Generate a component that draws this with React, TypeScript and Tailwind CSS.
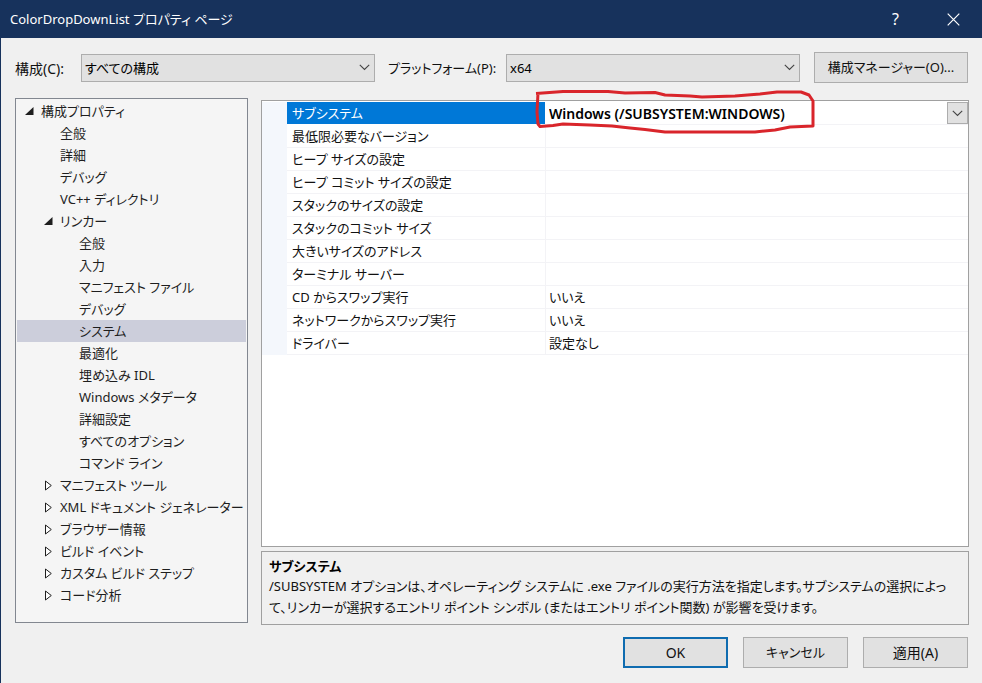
import { useState } from "react";

type TreeItem = { label: string; level: 0 | 1 | 2; state?: "open" | "closed" };

const treeItems: TreeItem[] = [
  { label: "構成プロパティ", level: 0, state: "open" },
  { label: "全般", level: 1 },
  { label: "詳細", level: 1 },
  { label: "デバッグ", level: 1 },
  { label: "VC++ ディレクトリ", level: 1 },
  { label: "リンカー", level: 1, state: "open" },
  { label: "全般", level: 2 },
  { label: "入力", level: 2 },
  { label: "マニフェスト ファイル", level: 2 },
  { label: "デバッグ", level: 2 },
  { label: "システム", level: 2 },
  { label: "最適化", level: 2 },
  { label: "埋め込み IDL", level: 2 },
  { label: "Windows メタデータ", level: 2 },
  { label: "詳細設定", level: 2 },
  { label: "すべてのオプション", level: 2 },
  { label: "コマンド ライン", level: 2 },
  { label: "マニフェスト ツール", level: 1, state: "closed" },
  { label: "XML ドキュメント ジェネレーター", level: 1, state: "closed" },
  { label: "ブラウザー情報", level: 1, state: "closed" },
  { label: "ビルド イベント", level: 1, state: "closed" },
  { label: "カスタム ビルド ステップ", level: 1, state: "closed" },
  { label: "コード分析", level: 1, state: "closed" },
];

const properties = [
  { name: "最低限必要なバージョン", value: "" },
  { name: "ヒープ サイズの設定", value: "" },
  { name: "ヒープ コミット サイズの設定", value: "" },
  { name: "スタックのサイズの設定", value: "" },
  { name: "スタックのコミット サイズ", value: "" },
  { name: "大きいサイズのアドレス", value: "" },
  { name: "ターミナル サーバー", value: "" },
  { name: "CD からスワップ実行", value: "いいえ" },
  { name: "ネットワークからスワップ実行", value: "いいえ" },
  { name: "ドライバー", value: "設定なし" },
];

const indent = { 0: "pl-2", 1: "pl-[27px]", 2: "pl-[46px]" };

function Chevron() {
  return (
    <svg width="11" height="7" viewBox="0 0 11 7" fill="none" stroke="#444" aria-hidden="true">
      <path d="M0.8 0.8 5.5 5.5 10.2 0.8" strokeWidth="1.1" />
    </svg>
  );
}

function Expander({ state }: { state?: "open" | "closed" }) {
  return (
    <span className="w-4 shrink-0">
      {state === "open" && (
        <svg width="9" height="9" viewBox="0 0 9 9" aria-hidden="true">
          <path d="M8.5 0v8H0z" fill="#1e1e1e" />
        </svg>
      )}
      {state === "closed" && (
        <svg width="9" height="11" viewBox="0 0 9 11" aria-hidden="true">
          <path d="M1.5 1v9L7.3 5.5z" fill="#fff" stroke="#1e1e1e" />
        </svg>
      )}
    </span>
  );
}

function ComboBox({ id, value }: { id: string; value: string }) {
  return (
    <div className="relative min-w-0 flex-1">
      <select
        id={id}
        className="block h-7 w-full appearance-none border border-[#adadad] bg-[#e1e1e1] pt-0.5 pr-6 pl-[3px] text-black"
      >
        <option>{value}</option>
      </select>
      <span className="pointer-events-none absolute inset-y-0 right-[5px] flex items-center">
        <Chevron />
      </span>
    </div>
  );
}

export default function App() {
  const [selected, setSelected] = useState(10);

  return (
    <div className="flex min-h-screen flex-col border-l border-[#17325c] bg-[#f0f0f0] font-['Noto_Sans','Noto_Sans_CJK_JP',sans-serif] text-[13px] text-[#111] [font-feature-settings:'palt']">
      <header className="flex h-[38px] items-center bg-[#17325c] text-white">
        <h1 className="flex-1 pt-0.5 pl-[9px]">ColorDropDownList プロパティ ページ</h1>
        <button aria-label="ヘルプ" className="h-full w-[57px] text-base">
          ?
        </button>
        <button aria-label="閉じる" className="flex h-full w-[58px] items-center justify-center">
          <svg width="13" height="13" viewBox="0 0 13 13" stroke="#fff" strokeWidth="1.2" aria-hidden="true">
            <path d="M0.7 0.7 12.3 12.3M12.3 0.7 0.7 12.3" />
          </svg>
        </button>
      </header>

      <div className="flex items-center py-[14px] pr-[14px] pl-[14px]">
        <label htmlFor="config" className="w-[66px] pt-0.5 text-sm">
          構成(C):
        </label>
        <ComboBox id="config" value="すべての構成" />
        <label htmlFor="platform" className="w-[131px] pt-0.5 pl-[13px]">
          プラットフォーム(P):
        </label>
        <ComboBox id="platform" value="x64" />
        <button className="ml-[14px] h-[31px] w-[154px] border border-[#adadad] bg-[#e1e1e1]">
          構成マネージャー(O)...
        </button>
      </div>

      <main className="flex flex-1 gap-[13px] pt-px pr-[13px] pl-[14px]">
        <ul role="tree" className="mb-0.5 w-[233px] shrink-0 border border-[#828790] bg-[#f5f5f5] p-px">
          {treeItems.map((item, i) => (
            <li key={i} role="treeitem" aria-selected={i === selected}>
              <button
                onClick={() => setSelected(i)}
                className={`flex h-[22px] w-full items-center whitespace-nowrap text-[#1e1e1e] ${indent[item.level]} ${
                  i === selected ? "bg-[#cccedb]" : ""
                }`}
              >
                <Expander state={item.state} />
                <span className="pt-0.5">{item.label}</span>
              </button>
            </li>
          ))}
        </ul>

        <div className="flex min-w-0 flex-1 flex-col gap-1 pt-0.5">
          <div className="flex-1 border border-[#a0a0a0] bg-white pt-px">
            <table className="w-full table-fixed border-separate border-spacing-0 text-left">
              <colgroup>
                <col className="w-[25px]" />
                <col className="w-[258px]" />
                <col />
              </colgroup>
              <tbody>
                <tr className="h-[23px]">
                  <td className="bg-[#f4f7fc] p-0" />
                  <th className="border-b border-white bg-[#0078d7] p-0 pt-0.5 pl-[5px] font-normal text-white">
                    サブシステム
                  </th>
                  <td className="p-0">
                    <div className="relative flex h-[23px] items-start border-b border-[#f3f3f6]">
                      <select
                        aria-label="サブシステム"
                        className="h-[22px] min-w-0 flex-1 appearance-none bg-white pt-px pl-1 text-sm font-semibold text-black"
                      >
                        <option>Windows (/SUBSYSTEM:WINDOWS)</option>
                      </select>
                      <span className="pointer-events-none flex h-[22px] w-[21px] items-center justify-center border border-[#adadad] bg-[#e1e1e1]">
                        <Chevron />
                      </span>
                      <svg
                        className="pointer-events-none absolute -top-[13px] -left-3"
                        width="284"
                        height="46"
                        viewBox="533 89 284 46"
                        fill="none"
                        stroke="#d9252b"
                        strokeWidth="3"
                        strokeLinejoin="round"
                        aria-hidden="true"
                      >
                        <path d="M536 93.500 563 91.500H608L625 93 655 92.500 665 95 690 96 702 97 735 96 760 94 777 92H801L809 95 813 101V126L790 127 775 130 755 132H665L645 129.500 630 128 612 126 590 125 563 124 553 125.500 540 126.500 538 124 537 112 538 93" />
                      </svg>
                    </div>
                  </td>
                </tr>
                {properties.map((p) => (
                  <tr key={p.name} className="h-[23px]">
                    <td className="bg-[#f4f7fc] p-0" />
                    <th className="border-b border-[#f3f3f6] p-0 pt-0.5 pl-[5px] font-normal">{p.name}</th>
                    <td className="border-b border-l border-[#f3f3f6] p-0 pt-0.5 pl-[3px]">{p.value}</td>
                  </tr>
                ))}
              </tbody>
            </table>
          </div>

          <section className="h-[74px] border border-[#a0a0a0] px-[7px] pt-1">
            <h2 className="leading-5 font-bold text-black">サブシステム</h2>
            <p className="leading-[21px] whitespace-nowrap">
              /SUBSYSTEM オプションは、オペレーティング システムに .exe ファイルの実行方法を指定します。サブシステムの選択によっ
              <br />
              て、リンカーが選択するエントリ ポイント シンボル (またはエントリ ポイント関数) が影響を受けます。
            </p>
          </section>
        </div>
      </main>

      <footer className="flex justify-end gap-[15px] pt-3 pr-[14px] pb-[15px] text-sm">
        <button className="h-[31px] w-[105px] border-2 border-[#0f6cb0] bg-[#e1e1e1]">OK</button>
        <button className="h-[31px] w-[105px] border border-[#adadad] bg-[#e1e1e1] text-[13px]">キャンセル</button>
        <button className="h-[31px] w-[105px] border border-[#adadad] bg-[#e1e1e1]">適用(A)</button>
      </footer>
    </div>
  );
}
